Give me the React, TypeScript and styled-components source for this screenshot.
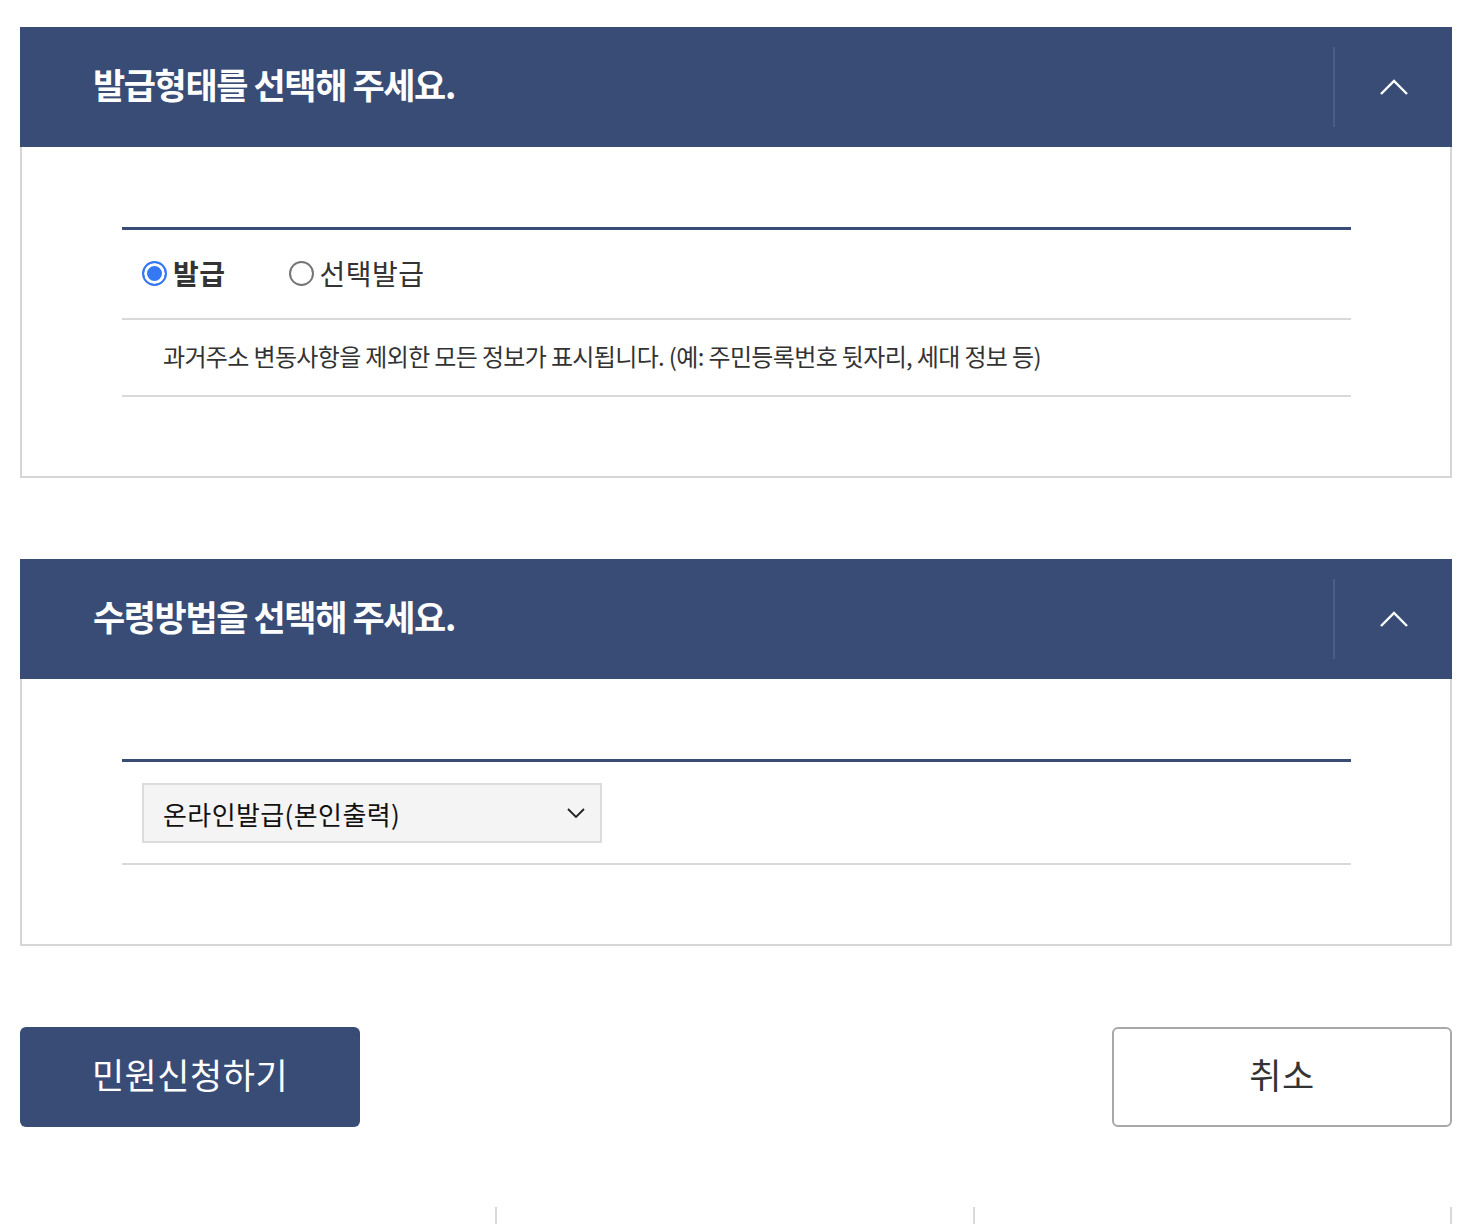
import React, { useState } from "react";
import styled, { createGlobalStyle } from "styled-components";

const Global = createGlobalStyle`
  html, body { margin: 0; padding: 0; background: #fff; }
  body { font-family: "Noto Sans CJK KR", "Noto Sans", sans-serif; color: #333; }
  * { box-sizing: border-box; }
`;

const Page = styled.div`
  padding: 27px 28px 0 20px;
  width: 1480px;
`;

const Section = styled.section`
  margin-bottom: 81px;
`;

const Header = styled.div`
  height: 120px;
  background: #394c76;
  display: flex;
  align-items: center;
  padding-left: 73px;
`;

const Title = styled.h2`
  flex: 1;
  margin: 0;
  color: #fff;
  font-size: 35px;
  font-weight: 700;
  letter-spacing: -1.4px;
  line-height: 1;
  padding-bottom: 8px;
`;

const Toggle = styled.button`
  width: 119px;
  height: 80px;
  border: 0;
  border-left: 2px solid #4c5e85;
  background: transparent;
  display: flex;
  align-items: center;
  justify-content: center;
  padding: 0;
  cursor: pointer;
`;

const Body = styled.div`
  border: 2px solid #d6d6d6;
  border-top: 0;
  padding: 80px 99px 79px 100px;
`;

const Table = styled.div`
  border-top: 3px solid #394c76;
`;

const Row = styled.div<{ $h: number; $pl: number }>`
  min-height: ${(p) => p.$h}px;
  border-bottom: 2px solid #d9d9d9;
  display: flex;
  align-items: center;
  padding-left: ${(p) => p.$pl}px;
`;

const SelectRow = styled.div`
  border-bottom: 2px solid #d9d9d9;
  padding: 21px 0 20px 20px;
`;

const RadioGroup = styled.div`
  display: flex;
  align-items: center;
  gap: 63px;
  padding-bottom: 2px;
`;

const RadioLabel = styled.label<{ $on: boolean }>`
  display: flex;
  align-items: center;
  gap: 6px;
  font-size: 28px;
  font-weight: ${(p) => (p.$on ? 700 : 400)};
  color: #333;
  letter-spacing: 0.5px;
  cursor: pointer;
`;

const RadioDot = styled.span<{ $on: boolean }>`
  width: 25px;
  height: 25px;
  border-radius: 50%;
  border: 2px solid ${(p) => (p.$on ? "#3478f6" : "#767676")};
  background: ${(p) => (p.$on ? "#3478f6" : "#fff")};
  box-shadow: ${(p) => (p.$on ? "inset 0 0 0 3px #fff" : "none")};
  flex: none;
`;

const Desc = styled.p`
  margin: 0;
  font-size: 24px;
  color: #333;
  letter-spacing: -0.65px;
  padding-bottom: 4px;
`;

const SelectBox = styled.div`
  width: 460px;
  height: 60px;
  background: #f4f4f4;
  border: 2px solid #dcdcdc;
  display: flex;
  align-items: center;
  justify-content: space-between;
  padding: 0 14px 0 19px;
  font-size: 26px;
  color: #111;
  letter-spacing: 0.4px;
`;

const Buttons = styled.div`
  display: flex;
  justify-content: space-between;
`;

const Btn = styled.button<{ $primary?: boolean }>`
  width: 340px;
  height: 100px;
  border-radius: 6px;
  font-family: "Noto Sans CJK KR", "Noto Sans", sans-serif;
  font-size: 35px;
  letter-spacing: 0.5px;
  cursor: pointer;
  background: ${(p) => (p.$primary ? "#394c76" : "#fff")};
  color: ${(p) => (p.$primary ? "#fff" : "#333")};
  border: ${(p) => (p.$primary ? "0" : "2px solid #a8a8a8")};
  padding-bottom: 8px;
`;

const Footer = styled.div`
  margin-top: 80px;
  display: grid;
  grid-template-columns: repeat(3, 1fr);
  width: 1432px;
  height: 17px;
`;

const FooterCol = styled.div`
  border-right: 2px solid #d9d9d9;
`;

const ChevronUp = () => (
  <svg width="30" height="18" viewBox="0 0 30 18" fill="none">
    <path d="M2 16 L15 3 L28 16" stroke="#fff" strokeWidth="2.4" />
  </svg>
);

const ChevronDown = () => (
  <svg width="20" height="12" viewBox="0 0 20 12" fill="none">
    <path d="M2 2 L10 10 L18 2" stroke="#222" strokeWidth="1.8" />
  </svg>
);

export default function App() {
  const [kind, setKind] = useState("issue");
  return (
    <Page>
      <Global />
      <Section>
        <Header>
          <Title>발급형태를 선택해 주세요.</Title>
          <Toggle aria-label="접기">
            <ChevronUp />
          </Toggle>
        </Header>
        <Body>
          <Table>
            <Row $h={90} $pl={20}>
              <RadioGroup>
                <RadioLabel $on={kind === "issue"} onClick={() => setKind("issue")}>
                  <RadioDot $on={kind === "issue"} />
                  발급
                </RadioLabel>
                <RadioLabel $on={kind === "select"} onClick={() => setKind("select")}>
                  <RadioDot $on={kind === "select"} />
                  선택발급
                </RadioLabel>
              </RadioGroup>
            </Row>
            <Row $h={77} $pl={41}>
              <Desc>과거주소 변동사항을 제외한 모든 정보가 표시됩니다. (예: 주민등록번호 뒷자리, 세대 정보 등)</Desc>
            </Row>
          </Table>
        </Body>
      </Section>
      <Section>
        <Header>
          <Title>수령방법을 선택해 주세요.</Title>
          <Toggle aria-label="접기">
            <ChevronUp />
          </Toggle>
        </Header>
        <Body>
          <Table>
            <SelectRow>
              <SelectBox>
                <span>온라인발급(본인출력)</span>
                <ChevronDown />
              </SelectBox>
            </SelectRow>
          </Table>
        </Body>
      </Section>
      <Buttons>
        <Btn $primary>민원신청하기</Btn>
        <Btn>취소</Btn>
      </Buttons>
      <Footer>
        <FooterCol />
        <FooterCol />
        <FooterCol />
      </Footer>
    </Page>
  );
}
